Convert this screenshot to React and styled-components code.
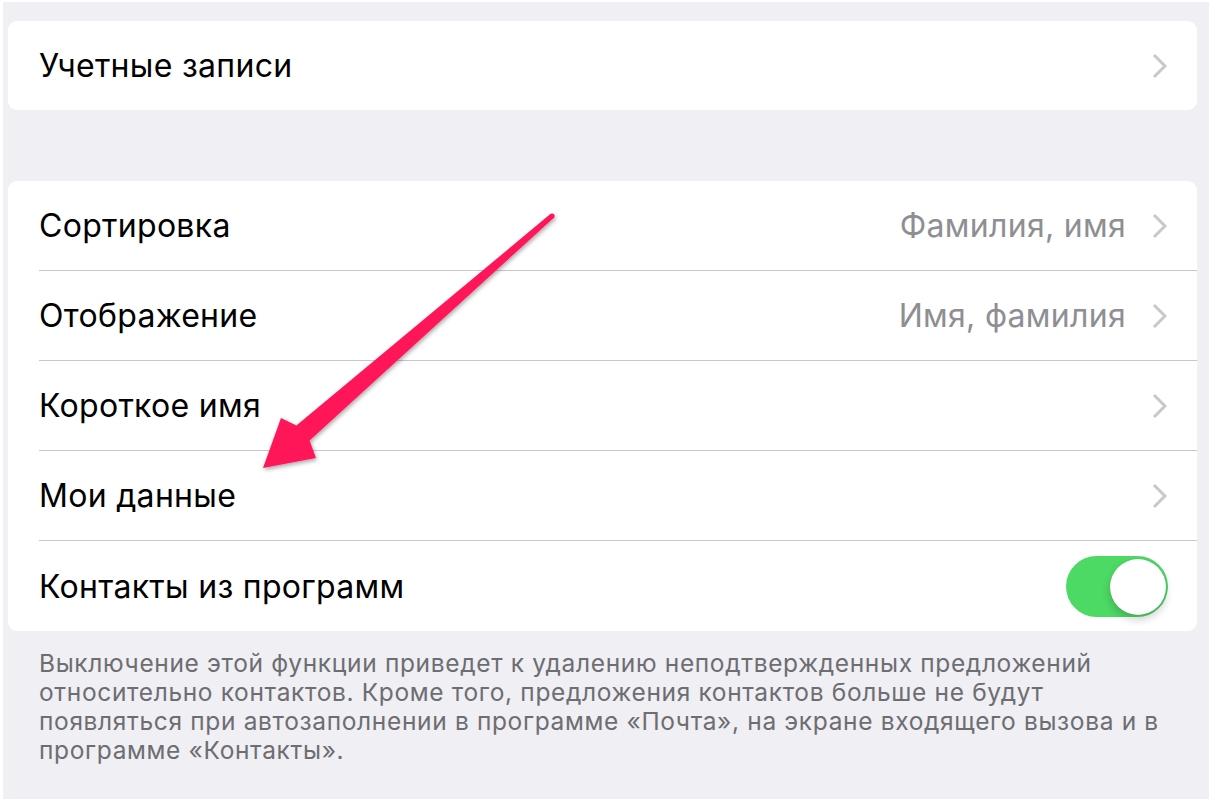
import styled, { createGlobalStyle } from 'styled-components';

const GlobalStyle = createGlobalStyle`
  html, body {
    margin: 0;
    padding: 0;
    background: #ffffff;
  }
  body {
    font-family: Inter, "Noto Sans", "Liberation Sans", sans-serif;
    -webkit-font-smoothing: antialiased;
  }
`;

const Frame = styled.div`
  width: 1212px;
  height: 802px;
  padding: 2px 3px 3px 3px;
  box-sizing: border-box;
`;

const Screen = styled.div`
  position: relative;
  height: 100%;
  background: #efeff4;
  padding: 19px 12px 0 5px;
  box-sizing: border-box;
  display: flex;
  flex-direction: column;
`;

const Card = styled.div`
  background: #ffffff;
  border-radius: 9px;
  margin-bottom: ${(p) => p.$gap || 0}px;
  overflow: hidden;
`;

const Row = styled.div`
  height: ${(p) => p.$h || 90}px;
  display: flex;
  align-items: center;
  padding-left: 31px;
  box-sizing: border-box;
`;

const RowInner = styled.div`
  flex: 1;
  height: 100%;
  display: flex;
  align-items: center;
  padding-right: 30px;
  box-sizing: border-box;
  border-bottom: ${(p) => (p.$last ? 'none' : '1px solid #c8c7cc')};
`;

const Label = styled.span`
  flex: 1;
  font-size: 32px;
  color: #000000;
  letter-spacing: 0.3px;
`;

const Value = styled.span`
  font-size: 32px;
  color: #8e8e93;
  letter-spacing: 0.3px;
  margin-right: 26px;
`;

const Chevron = styled.svg`
  width: 15px;
  height: 26px;
  flex-shrink: 0;
`;

const Toggle = styled.div`
  position: relative;
  width: 102px;
  height: 61px;
  border-radius: 31px;
  background: #4cd964;
  margin-right: -1px;
`;

const Knob = styled.div`
  position: absolute;
  top: 3px;
  right: 2px;
  width: 56px;
  height: 56px;
  border-radius: 50%;
  background: #ffffff;
  box-shadow: 0 5px 8px rgba(0, 0, 0, 0.18), 0 0 1px rgba(0, 0, 0, 0.25);
`;

const Footer = styled.p`
  margin: 18px 0 0 31px;
  font-size: 24.5px;
  letter-spacing: 0.65px;
  line-height: 29px;
  color: #6d6d72;
  white-space: nowrap;
`;

const Arrow = styled.svg`
  position: absolute;
  left: 0;
  top: 0;
  width: 1206px;
  height: 797px;
  pointer-events: none;
`;

function ChevronIcon() {
  return (
    <Chevron viewBox="0 0 15 26">
      <path d="M2 2 L13 13 L2 24" fill="none" stroke="#c7c7cc" strokeWidth="3" />
    </Chevron>
  );
}

const rows = [
  { label: 'Сортировка', value: 'Фамилия, имя' },
  { label: 'Отображение', value: 'Имя, фамилия' },
  { label: 'Короткое имя' },
  { label: 'Мои данные' },
];

export default function App() {
  return (
    <Frame>
      <GlobalStyle />
      <Screen>
        <Card $gap={71}>
          <Row $h={89}>
            <RowInner $last>
              <Label>Учетные записи</Label>
              <ChevronIcon />
            </RowInner>
          </Row>
        </Card>
        <Card>
          {rows.map((r) => (
            <Row key={r.label}>
              <RowInner>
                <Label>{r.label}</Label>
                {r.value && <Value>{r.value}</Value>}
                <ChevronIcon />
              </RowInner>
            </Row>
          ))}
          <Row>
            <RowInner $last>
              <Label>Контакты из программ</Label>
              <Toggle>
                <Knob />
              </Toggle>
            </RowInner>
          </Row>
        </Card>
        <Footer>
          Выключение этой функции приведет к удалению неподтвержденных предложений
          <br />
          относительно контактов. Кроме того, предложения контактов больше не будут
          <br />
          появляться при автозаполнении в программе «Почта», на экране входящего вызова и в
          <br />
          программе «Контакты».
        </Footer>
        <Arrow viewBox="3 2 1206 797">
          <defs>
            <filter id="shadow" x="-20%" y="-20%" width="140%" height="140%">
              <feDropShadow dx="1" dy="2" stdDeviation="2" floodColor="#000" floodOpacity="0.35" />
            </filter>
          </defs>
          <g filter="url(#shadow)" fill="#fe1659">
            <polygon points="550.4,214.1 296.4,425.5 281,418 263,468 316,458 309.6,440.5 553.6,217.9" />
            <circle cx="552" cy="216" r="2.6" />
          </g>
        </Arrow>
      </Screen>
    </Frame>
  );
}
